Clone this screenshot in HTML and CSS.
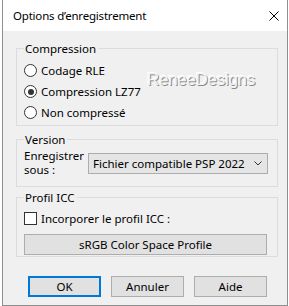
FILE: index.html
```html
<!DOCTYPE html>
<html lang="fr">
<head>
    <meta charset="UTF-8">
    <title>Options d'enregistrement</title>
    <link rel="stylesheet" href="styles.css">
</head>
<body>
    <div class="window">
        <div class="titlebar">
            <span class="title">Options d’enregistrement</span>
            <svg class="close" width="10" height="10" viewBox="0 0 10 10">
                <path d="M0.5 0.5 L9.5 9.5 M9.5 0.5 L0.5 9.5" stroke="#000" stroke-width="1" fill="none"/>
            </svg>
        </div>
        <div class="content">
            <fieldset class="group group-compression">
                <legend>Compression</legend>
                <label class="option"><span class="radio"></span>Codage RLE</label>
                <label class="option"><span class="radio checked"></span>Compression LZ77</label>
                <label class="option"><span class="radio"></span>Non compressé</label>
                <span class="watermark">ReneeDesigns</span>
            </fieldset>

            <fieldset class="group group-version">
                <legend>Version</legend>
                <div class="version-row">
                    <span class="version-label">Enregistrer<br>sous :</span>
                    <div class="select">
                        <span>Fichier compatible PSP 2022</span>
                        <svg width="8" height="5" viewBox="0 0 8 5">
                            <path d="M0.5 0.5 L4 4 L7.5 0.5" stroke="#333" stroke-width="1" fill="none"/>
                        </svg>
                    </div>
                </div>
            </fieldset>

            <fieldset class="group group-icc">
                <legend>Profil ICC</legend>
                <label class="option"><span class="checkbox"></span>Incorporer le profil ICC :</label>
                <button class="btn btn-wide">sRGB Color Space Profile</button>
            </fieldset>

            <div class="actions">
                <button class="btn btn-default">OK</button>
                <button class="btn">Annuler</button>
                <button class="btn">Aide</button>
            </div>
        </div>
    </div>
</body>
</html>
```

FILE: styles.css
```css
html, body {
    margin: 0;
    padding: 0;
    background: #ffffff;
}
body {
    font-family: 'Noto Sans', 'Open Sans', sans-serif;
    font-size: 11.5px;
    color: #000;
}
.window {
    width: 284px;
    height: 305px;
    margin-left: 2px;
    border-left: 1px solid #8f8f8f;
    border-right: 1px solid #8f8f8f;
    border-bottom: 1px solid #8f8f8f;
    background: #f0f0f0;
    display: flex;
    flex-direction: column;
}
.titlebar {
    height: 31px;
    flex: none;
    background: #ffffff;
    display: flex;
    align-items: center;
    justify-content: space-between;
    padding: 0 8px 0 10px;
}
.title {
    font-size: 11.5px;
    letter-spacing: -0.2px;
}
.content {
    padding: 10px 9px 0 13px;
}
.group {
    position: relative;
    box-sizing: border-box;
    margin: 0;
    padding: 0 0 0 7px;
    border: 1px solid #dcdcdc;
    min-width: 0;
}
.group legend {
    padding: 0 2px 0 1px;
    line-height: 15px;
}
.group-compression {
    height: 85px;
    padding-top: 4px;
}
.group-version {
    height: 55px;
    margin-top: 6px;
}
.group-icc {
    height: 67px;
    margin-top: 3px;
    padding-top: 3px;
}
.option {
    display: flex;
    align-items: center;
    gap: 4px;
    height: 21px;
}
.radio {
    width: 11px;
    height: 11px;
    border: 1px solid #333;
    border-radius: 50%;
    background: #fff;
    position: relative;
    flex: none;
}
.radio.checked::after {
    content: '';
    position: absolute;
    left: 2.5px;
    top: 2.5px;
    width: 6px;
    height: 6px;
    border-radius: 50%;
    background: #333;
}
.checkbox {
    width: 11px;
    height: 11px;
    border: 1px solid #333;
    background: #fff;
    flex: none;
}
.watermark {
    position: absolute;
    left: 130px;
    top: 14px;
    font-family: 'Liberation Sans Narrow', 'Liberation Sans', sans-serif;
    font-size: 17px;
    letter-spacing: -0.3px;
    color: #f2f2f2;
    text-shadow: 1px 1px 0 #8a8a8a, -1px -1px 0 #ffffff;
}
.version-row {
    display: flex;
    align-items: center;
    gap: 4px;
    height: 28px;
    margin-top: 2px;
}
.version-label {
    flex: 0 0 59px;
    line-height: 14px;
    white-space: nowrap;
}
.select {
    width: 180px;
    height: 21px;
    box-sizing: border-box;
    border: 1px solid #adadad;
    background: #e5e5e5;
    display: flex;
    align-items: center;
    justify-content: space-between;
    padding: 0 5px 0 4px;
}
.btn {
    font-family: inherit;
    font-size: 11.5px;
    color: #000;
    background: #e1e1e1;
    border: 1px solid #adadad;
    height: 21px;
    padding: 0;
    box-sizing: border-box;
}
.btn-wide {
    display: block;
    width: 243px;
    margin-top: 5px;
}
.actions {
    display: flex;
    gap: 10px;
    margin-top: 19px;
    padding-left: 12px;
}
.actions .btn {
    width: 73px;
}
.btn-default {
    border: 2px solid #0078d7;
}
```
